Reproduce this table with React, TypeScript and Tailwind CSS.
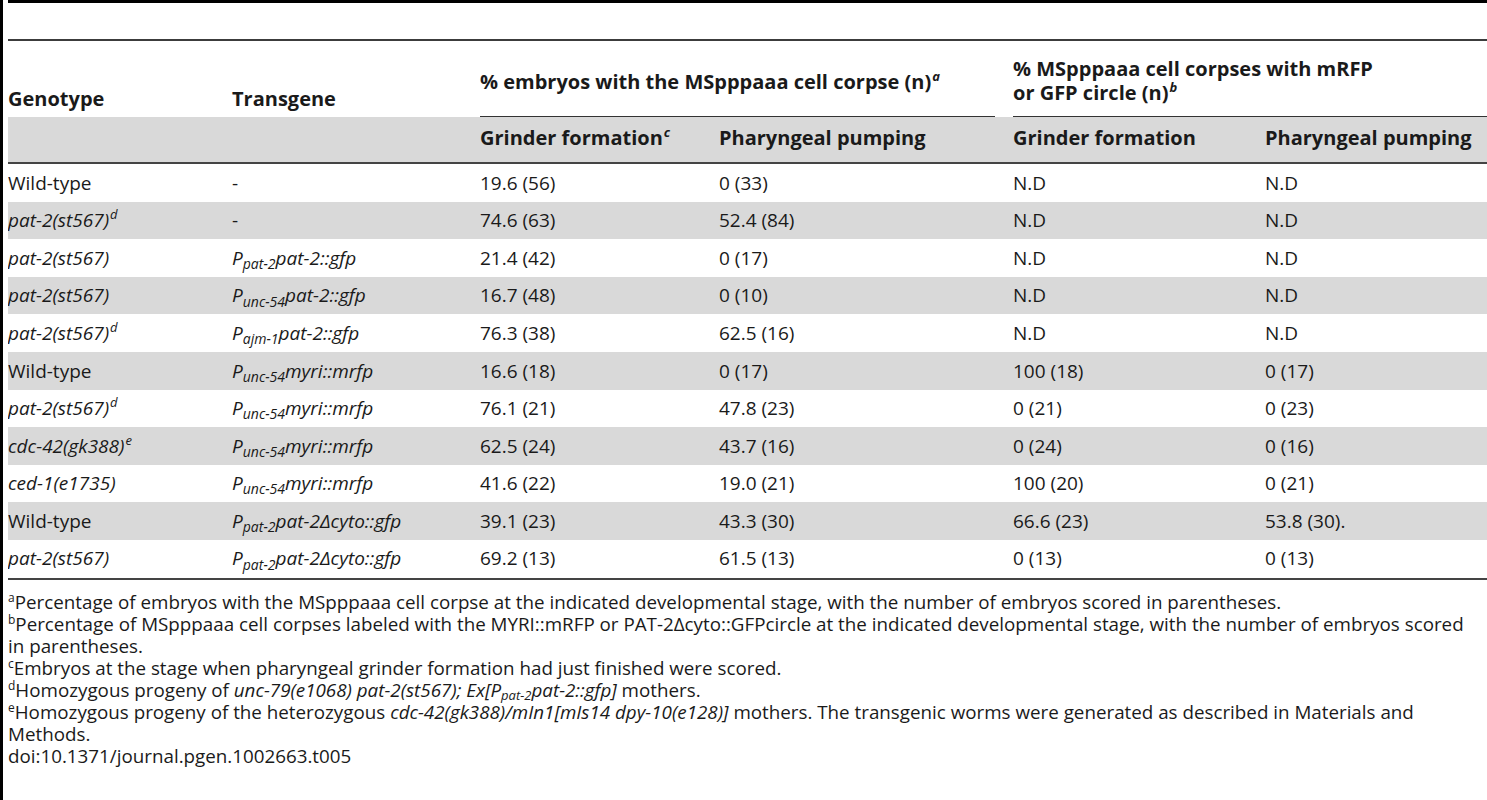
import React from "react";

const GRID = "grid grid-cols-[224px_248px_239px_294px_252px_1fr]";

const I = ({ children }: { children: React.ReactNode }) => <i className="italic">{children}</i>;
const Sup = ({ children, it = true }: { children: React.ReactNode; it?: boolean }) => (
  <sup className={`${it ? "italic" : ""} text-[13px] top-[-0.6em] ml-[1px]`}>{children}</sup>
);
const P = ({ sub, rest }: { sub: string; rest: React.ReactNode }) => (
  <span className="italic">
    P<sub className="text-[14px] bottom-[-0.3em]">{sub}</sub>
    {rest}
  </span>
);

type Row = [React.ReactNode, React.ReactNode, string, string, string, string];

const rows: Row[] = [
  ["Wild-type", "-", "19.6 (56)", "0 (33)", "N.D", "N.D"],
  [<><I>pat-2(st567)</I><Sup>d</Sup></>, "-", "74.6 (63)", "52.4 (84)", "N.D", "N.D"],
  [<I>pat-2(st567)</I>, <P sub="pat-2" rest="pat-2::gfp" />, "21.4 (42)", "0 (17)", "N.D", "N.D"],
  [<I>pat-2(st567)</I>, <P sub="unc-54" rest="pat-2::gfp" />, "16.7 (48)", "0 (10)", "N.D", "N.D"],
  [<><I>pat-2(st567)</I><Sup>d</Sup></>, <P sub="ajm-1" rest="pat-2::gfp" />, "76.3 (38)", "62.5 (16)", "N.D", "N.D"],
  ["Wild-type", <P sub="unc-54" rest="myri::mrfp" />, "16.6 (18)", "0 (17)", "100 (18)", "0 (17)"],
  [<><I>pat-2(st567)</I><Sup>d</Sup></>, <P sub="unc-54" rest="myri::mrfp" />, "76.1 (21)", "47.8 (23)", "0 (21)", "0 (23)"],
  [<><I>cdc-42(gk388)</I><Sup>e</Sup></>, <P sub="unc-54" rest="myri::mrfp" />, "62.5 (24)", "43.7 (16)", "0 (24)", "0 (16)"],
  [<I>ced-1(e1735)</I>, <P sub="unc-54" rest="myri::mrfp" />, "41.6 (22)", "19.0 (21)", "100 (20)", "0 (21)"],
  ["Wild-type", <P sub="pat-2" rest="pat-2Δcyto::gfp" />, "39.1 (23)", "43.3 (30)", "66.6 (23)", "53.8 (30)."],
  [<I>pat-2(st567)</I>, <P sub="pat-2" rest="pat-2Δcyto::gfp" />, "69.2 (13)", "61.5 (13)", "0 (13)", "0 (13)"],
];

const FSup = ({ children }: { children: React.ReactNode }) => (
  <sup className="text-[12px] top-[-0.55em]">{children}</sup>
);

export default function App() {
  return (
    <div className="flex min-h-[800px] bg-white font-['Open_Sans',sans-serif] text-[#1a1a1a]">
      <div className="w-[3px] shrink-0 bg-black" />
      <div className="ml-[5px] flex-1 flex flex-col overflow-hidden">
        <div className="h-[3px] bg-black" />
        <div className="h-[36px]" />
        <div className="h-[2px] bg-[#3c3c3c]" />

        {/* header row 1 */}
        <div className={`${GRID} h-[76px] text-[20px] font-bold leading-[24px]`}>
          <div className="flex items-end pb-[6px]">Genotype</div>
          <div className="flex items-end pb-[6px]">Transgene</div>
          <div className="col-span-2 flex flex-col mr-[18px]">
            <div className="flex-1 flex items-center pt-[7px]">
              <span>
                % embryos with the MSpppaaa cell corpse (n)<Sup>a</Sup>
              </span>
            </div>
            <div className="h-[1px] bg-[#333]" />
          </div>
          <div className="col-span-2 flex flex-col">
            <div className="flex-1 flex items-center pt-[5px]">
              <span>
                % MSpppaaa cell corpses with mRFP
                <br />
                or GFP circle (n)<Sup>b</Sup>
              </span>
            </div>
            <div className="h-[1px] bg-[#333]" />
          </div>
        </div>

        {/* header row 2 */}
        <div className={`${GRID} h-[45px] bg-[#d9d9d9] text-[20px] font-bold items-center pb-[4px]`}>
          <div />
          <div />
          <div>
            Grinder formation<Sup>c</Sup>
          </div>
          <div>Pharyngeal pumping</div>
          <div>Grinder formation</div>
          <div>Pharyngeal pumping</div>
        </div>
        <div className="h-[2px] bg-[#444]" />

        {/* body */}
        <div className="flex flex-col text-[19px]">
          {rows.map((r, i) => (
            <div key={i} className={`${GRID} h-[37.6px] items-center ${i % 2 === 1 ? "bg-[#d9d9d9]" : "bg-white"}`}>
              {r.map((c, j) => (
                <div key={j} className="whitespace-nowrap">
                  {c}
                </div>
              ))}
            </div>
          ))}
        </div>
        <div className="h-[2px] bg-[#444]" />

        {/* footnotes */}
        <div className="pt-[11px] text-[18.8px] leading-[22px] whitespace-nowrap">
          <div>
            <FSup>a</FSup>Percentage of embryos with the MSpppaaa cell corpse at the indicated developmental stage, with the number of embryos scored in parentheses.
          </div>
          <div>
            <FSup>b</FSup>Percentage of MSpppaaa cell corpses labeled with the MYRI::mRFP or PAT-2Δcyto::GFPcircle at the indicated developmental stage, with the number of embryos scored
          </div>
          <div>in parentheses.</div>
          <div>
            <FSup>c</FSup>Embryos at the stage when pharyngeal grinder formation had just finished were scored.
          </div>
          <div>
            <FSup>d</FSup>Homozygous progeny of <I>unc-79(e1068) pat-2(st567); Ex[P<sub className="text-[13px] bottom-[-0.3em]">pat-2</sub>pat-2::gfp]</I> mothers.
          </div>
          <div>
            <FSup>e</FSup>Homozygous progeny of the heterozygous <I>cdc-42(gk388)/mIn1[mIs14 dpy-10(e128)]</I> mothers. The transgenic worms were generated as described in Materials and
          </div>
          <div>Methods.</div>
          <div>doi:10.1371/journal.pgen.1002663.t005</div>
        </div>
      </div>
    </div>
  );
}
